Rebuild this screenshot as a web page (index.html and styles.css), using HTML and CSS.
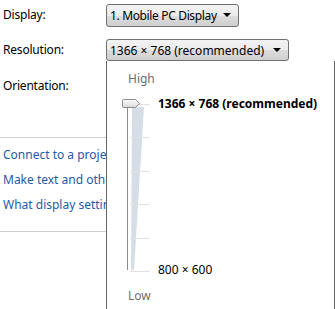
FILE: index.html
```html
<!DOCTYPE html>
<html>
<head>
<meta charset="utf-8">
<link rel="stylesheet" href="styles.css">
</head>
<body>
<div class="page">
  <div class="settings">
    <div class="row row-display">
      <span class="label">Display:</span>
      <div class="combo combo-display">
        <span class="combo-text tight">1. Mobile PC Display</span>
        <span class="arrow"></span>
      </div>
    </div>
    <div class="row row-res">
      <span class="label">Resolution:</span>
      <div class="combo combo-res">
        <span class="combo-text">1366 × 768 (recommended)</span>
        <span class="arrow"></span>
      </div>
    </div>
    <div class="row row-orient">
      <span class="label">Orientation:</span>
    </div>
  </div>
  <div class="links">
    <a class="link">Connect to a projector (or press the ⊞ key and tap P)</a>
    <a class="link">Make text and other items larger or smaller</a>
    <a class="link">What display settings should I choose?</a>
  </div>

  <div class="popup">
    <div class="end-label">High</div>
    <div class="slider">
      <svg class="track" width="40" height="180" viewBox="0 0 40 180">
        <defs>
          <linearGradient id="thumbg" x1="0" y1="0" x2="0" y2="1">
            <stop offset="0" stop-color="#fbfbfb"/>
            <stop offset="0.5" stop-color="#ececec"/>
            <stop offset="1" stop-color="#d6d6d6"/>
          </linearGradient>
        </defs>
        <polygon points="16,12 28,12 18,175 15,175" fill="#d5dde6"/>
        <line x1="11.5" y1="10" x2="11.5" y2="175" stroke="#8a8a8a" stroke-width="1"/>
        <g stroke="#e2e2e2" stroke-width="1">
          <line x1="14" y1="9.5" x2="34" y2="9.5"/>
          <line x1="14" y1="42.5" x2="34" y2="42.5"/>
          <line x1="14" y1="76.5" x2="34" y2="76.5"/>
          <line x1="14" y1="109.5" x2="34" y2="109.5"/>
          <line x1="14" y1="143.5" x2="34" y2="143.5"/>
          <line x1="14" y1="176.5" x2="34" y2="176.5"/>
        </g>
        <path d="M7.5,4.5 H19.5 L23.5,8.5 L19.5,12.5 H7.5 Q6.5,12.5 6.5,11.5 V5.5 Q6.5,4.5 7.5,4.5 Z" fill="url(#thumbg)" stroke="#8c8c8c" stroke-width="1"/>
      </svg>
      <div class="values">
        <span class="value value-top">1366 × 768 (recommended)</span>
        <span class="value">800 × 600</span>
      </div>
    </div>
    <div class="end-label end-low">Low</div>
  </div>
</div>
</body>
</html>
```
FILE: styles.css
```css
html, body {
  margin: 0;
  padding: 0;
  background: #ffffff;
}
body {
  font-family: "Noto Sans", "Open Sans", sans-serif;
  font-size: 12px;
  color: #000;
  width: 335px;
  height: 309px;
  overflow: hidden;
}
.page {
  position: relative;
  width: 335px;
  height: 309px;
}
.settings {
  display: flex;
  flex-direction: column;
  padding-top: 4px;
}
.row {
  display: flex;
  align-items: center;
  height: 22px;
}
.row-res {
  margin-top: 13px;
}
.row-orient {
  margin-top: 14px;
}
.label {
  width: 106px;
  padding-left: 3px;
  box-sizing: border-box;
  line-height: 16px;
  letter-spacing: -0.2px;
}
.combo {
  box-sizing: border-box;
  height: 23px;
  border: 1px solid #707070;
  border-radius: 3px;
  background: linear-gradient(#f3f3f3 0%, #ebebeb 50%, #dddddd 51%, #cfcfcf 100%);
  display: flex;
  align-items: center;
  padding-left: 3px;
  padding-right: 7px;
  justify-content: space-between;
  white-space: nowrap;
}
.tight {
  letter-spacing: -0.35px;
}
.combo-display {
  width: 133px;
}
.combo-res {
  width: 183px;
  height: 22px;
}
.arrow {
  width: 0;
  height: 0;
  border-left: 4px solid transparent;
  border-right: 4px solid transparent;
  border-top: 4px solid #000;
  flex: none;
}
.links {
  margin-top: 40px;
  width: 106px;
  border-top: 1px solid #d0d0d0;
  border-bottom: 1px solid #d0d0d0;
  padding: 7px 0 17px 3px;
  box-sizing: border-box;
  display: flex;
  flex-direction: column;
  gap: 6px;
  white-space: nowrap;
}
.link {
  color: #1e5ba8;
  line-height: 19px;
}
.popup {
  position: absolute;
  left: 106px;
  top: 61px;
  width: 229px;
  height: 260px;
  box-sizing: border-box;
  background: #ffffff;
  border-left: 1px solid #646464;
  border-right: 1px solid #646464;
  padding-top: 10px;
}
.end-label {
  color: #6d6d6d;
  padding-left: 21px;
  line-height: 16px;
}
.slider {
  display: flex;
  margin-top: 8px;
  margin-left: 9px;
  height: 180px;
}
.track {
  display: block;
}
.values {
  display: flex;
  flex-direction: column;
  justify-content: space-between;
  padding-left: 2px;
  padding-top: 1px;
  height: 183px;
  box-sizing: border-box;
}
.value {
  line-height: 16px;
}
.value-top {
  font-weight: bold;
}
.end-low {
  margin-top: 13px;
}
```
